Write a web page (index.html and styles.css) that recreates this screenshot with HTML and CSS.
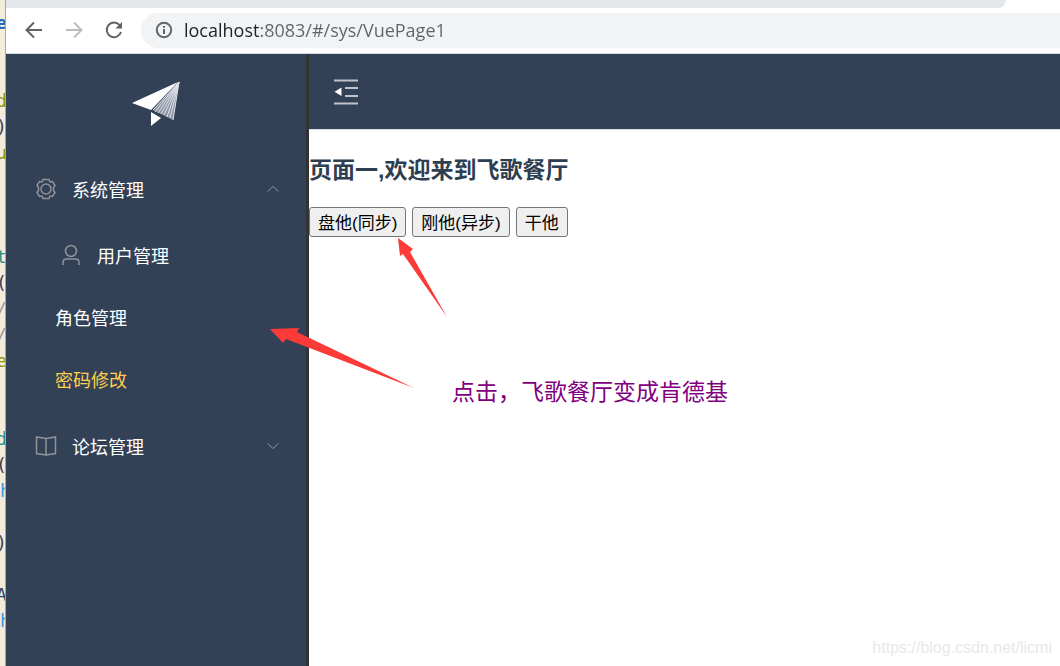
FILE: index.html
```html
<!DOCTYPE html>
<html lang="zh-CN">
<head>
  <meta charset="utf-8">
  <title>VuePage1</title>
  <link rel="stylesheet" href="styles.css">
</head>
<body>
  <div class="desktop">
    <!-- edge of the editor behind the browser -->
    <pre class="editor"><span class="cut blue">e</span>


<span class="cut olive">d</span>
<span class="cut">)</span>
<span class="cut olive">u</span>



<span class="cut teal">t</span>
<span class="cut">(</span>
<span class="cut gray">/</span>
<span class="cut gray">/</span>
<span class="cut olive">e</span>


<span class="cut teal">d</span>
<span class="cut">(</span>
<span class="sky">h</span>

<span class="cut">)</span>

<span class="cut">A</span>
<span class="sky">h</span>
</pre>

    <div class="browser">
      <div class="tab-strip"></div>
      <div class="toolbar">
        <button class="nav-button" aria-label="Back">
          <svg width="20" height="20" viewBox="0 0 20 20"><path d="M18 10H3M10 2.500L2.500 10L10 17.500"/></svg>
        </button>
        <button class="nav-button disabled" aria-label="Forward" disabled>
          <svg width="20" height="20" viewBox="0 0 20 20"><path d="M2 10H17M10 2.500L17.500 10L10 17.500"/></svg>
        </button>
        <button class="nav-button" aria-label="Reload">
          <svg width="20" height="20" viewBox="0 0 20 20"><path d="M15.500 5A7.300 7.300 0 1 0 17 12"/><path class="solid" d="M18 2V8.500H11.500Z"/></svg>
        </button>
        <div class="address">
          <svg width="18" height="18" viewBox="0 0 18 18"><circle cx="9" cy="9" r="7.200"/><path d="M9 8V13M9 5V6.800"/></svg>
          <input class="url" type="text" aria-label="Address" value="localhost:8083/#/sys/VuePage1">
        </div>
      </div>

      <div class="app">
        <nav class="sidebar">
          <div class="logo">
            <svg width="48" height="46" viewBox="0 0 48 46">
              <path fill="#fff" d="M0 22L46 1L19 29Z"/>
              <path fill="#fff" d="M19 31L29 37L19 45Z"/>
              <path fill="#8e97a5" d="M47 1L41 39L21 29Z"/>
              <path stroke="#e0e4e9" stroke-width="1" d="M47 1L21 29M47 1L23 31M47 1L26 32M47 1L29 33M47 1L32 34M47 1L35 36M47 1L38 37M47 1L41 39"/>
            </svg>
          </div>
          <button class="menu-title" aria-expanded="true">
            <svg class="icon" width="22" height="22" viewBox="0 0 22 22"><circle cx="11" cy="11" r="5"/><path d="M8 1.500H14L15 4L17.500 3.500L20 7.500L18.500 9.500V12.500L20 14.500L17.500 18.500L15 18L14 20.500H8L7 18L4.500 18.500L2 14.500L3.500 12.500V9.500L2 7.500L4.500 3.500L7 4Z"/></svg>
            <span>系统管理</span>
            <svg class="arrow" width="12" height="8" viewBox="0 0 12 8"><path d="M0.500 6.500L6 1.500L11.500 6.500"/></svg>
          </button>
          <a class="menu-item nested" href="#/sys/user">
            <svg class="icon" width="22" height="22" viewBox="0 0 22 22"><circle cx="11" cy="7" r="5.500"/><path d="M3 21V18.500Q3 15 6.500 15H15.500Q19 15 19 18.500V21"/></svg>
            <span>用户管理</span>
          </a>
          <a class="menu-item" href="#/sys/role">角色管理</a>
          <a class="menu-item active" href="#/sys/VuePage1">密码修改</a>
          <button class="menu-title" aria-expanded="false">
            <svg class="icon" width="22" height="22" viewBox="0 0 22 22"><path d="M1.500 2L11 3.500L20.500 2V18.500L11 20L1.500 18.500ZM11 3.500V20"/></svg>
            <span>论坛管理</span>
            <svg class="arrow" width="12" height="8" viewBox="0 0 12 8"><path d="M0.500 1.500L6 6.500L11.500 1.500"/></svg>
          </button>
        </nav>

        <div class="content">
          <header class="header">
            <button class="collapse" aria-label="Collapse menu">
              <svg width="24" height="26" viewBox="0 0 24 26"><path d="M0 1.500H24M11 9H24M11 17H24M0 24.500H24"/><path class="solid" d="M7.500 8.500V17L0.500 12.700Z"/></svg>
            </button>
          </header>
          <main class="page">
            <h2>页面一,欢迎来到飞歌餐厅</h2>
            <div class="actions">
              <button class="action">盘他(同步)</button>
              <button class="action">刚他(异步)</button>
              <button class="action">干他</button>
            </div>
          </main>
        </div>
      </div>
    </div>

    <svg class="pointers" width="180" height="160" viewBox="0 0 180 160">
      <path d="M128 0L143 11L140 14L177 79L133 16L130 18Z"/>
      <path d="M0 91L29 90L27 94L144 150L16 101L13 105Z"/>
    </svg>
    <div class="note">点击，飞歌餐厅变成肯德基</div>
    <div class="watermark">https://blog.csdn.net/licmi</div>
  </div>
</body>
</html>
```
FILE: styles.css
```css
:root {
  --navy: #334157;
  --border-dark: #333;
  --toolbar-icon: #5f6368;
  --menu-icon: #909399;
}

* {
  box-sizing: border-box;
}

body {
  margin: 0;
  font-family: "Liberation Sans", "Noto Sans CJK SC", sans-serif;
  font-size: 18px;
  background: #fff;
}

button {
  font-family: inherit;
  cursor: pointer;
}

svg {
  display: block;
  flex: none;
  fill: none;
}

.desktop {
  position: relative;
  display: flex;
  height: 100vh;
  overflow: hidden;
}

.editor {
  flex: none;
  width: 6px;
  margin: 0;
  padding-top: 10px;
  overflow: hidden;
  border-right: 1px solid #aaa69b;
  background: #f4ecda;
  color: #33415c;
  font: 18px/26px "DejaVu Sans Mono", monospace;
}

/* glyphs that start left of the visible strip */
.editor .cut {
  margin-left: -4px;
}

.editor .blue {
  color: #2468c0;
  font-weight: bold;
}

.editor .olive { color: #859900; }
.editor .teal { color: #2a9187; }
.editor .sky { color: #3498db; }
.editor .gray { color: #999; }

.browser {
  flex: 1;
  min-width: 0;
  display: flex;
  flex-direction: column;
}

.tab-strip {
  height: 8px;
  margin-right: 54px;
  border-bottom-right-radius: 8px;
  background: #e4e8eb;
}

.toolbar {
  display: flex;
  align-items: center;
  gap: 20px;
  height: 46px;
  padding-left: 18px;
  padding-bottom: 1px;
  border-bottom: 1px solid #d5d8dc;
}

.nav-button {
  padding: 0;
  border: none;
  background: none;
  color: var(--toolbar-icon);
}

.nav-button.disabled {
  color: #babcbe;
}

.nav-button path {
  stroke: currentColor;
  stroke-width: 2;
}

.nav-button .solid {
  fill: currentColor;
  stroke: none;
}

.address {
  flex: 1;
  display: flex;
  align-items: center;
  gap: 11px;
  height: 35px;
  margin-left: -3px;
  padding-left: 14px;
  border-radius: 18px 0 0 18px;
  background: #f1f3f4;
}

.address svg {
  stroke: var(--toolbar-icon);
  stroke-width: 2;
}

/* host is darker than the rest of the url */
.url {
  flex: 1;
  padding: 0;
  border: none;
  outline: none;
  background: linear-gradient(to right, #202124 76px, #5f6368 76px);
  background-clip: text;
  -webkit-background-clip: text;
  color: transparent;
  font: 18px "Open Sans", sans-serif;
}

.app {
  flex: 1;
  display: flex;
}

.sidebar {
  flex: none;
  width: 303px;
  border-right: 3px solid var(--border-dark);
  background: var(--navy);
}

.logo {
  display: flex;
  align-items: center;
  justify-content: center;
  height: 100px;
}

.menu-title,
.menu-item {
  display: flex;
  align-items: center;
  gap: 15px;
  padding-bottom: 2px;
  color: #fff;
  font-size: 18px;
  text-decoration: none;
}

.menu-title {
  width: 100%;
  height: 71px;
  padding: 0 27px 2px 29px;
  border: none;
  background: none;
}

.menu-item {
  height: 62px;
  padding-left: 49px;
}

.menu-item.nested {
  padding-left: 54px;
}

.menu-item.active {
  color: #ffd04b;
}

.icon {
  stroke: var(--menu-icon);
  stroke-width: 1.5;
}

.arrow {
  margin-left: auto;
  stroke: var(--menu-icon);
  stroke-width: 1;
}

.content {
  flex: 1;
  min-width: 0;
}

.header {
  display: flex;
  align-items: center;
  height: 76px;
  padding-left: 25px;
  border-bottom: 1px solid #dcdfe6;
  background: var(--navy);
}

.collapse {
  padding: 0;
  border: none;
  background: none;
}

.collapse path {
  stroke: #c0c4cc;
  stroke-width: 2;
}

.collapse .solid {
  fill: #fff;
  stroke: none;
}

.page h2 {
  margin: 24px 0 21px;
  color: #2c3e50;
  font-size: 23px;
  line-height: 32px;
}

.actions {
  display: flex;
  gap: 6px;
}

.action {
  height: 30px;
  padding: 3px 8px 0;
  border: 1px solid #767676;
  border-radius: 3px;
  background: #efefef;
  color: #000;
  font-size: 17px;
  line-height: 26px;
}

/* annotations drawn over the page */
.pointers {
  position: absolute;
  left: 270px;
  top: 238px;
  fill: #fc3a38;
  pointer-events: none;
}

.note {
  position: absolute;
  left: 452px;
  top: 376px;
  color: #800080;
  font-size: 23px;
  line-height: 32px;
}

.watermark {
  position: absolute;
  right: 8px;
  bottom: 8px;
  color: #e8e8e8;
  font-size: 16px;
  line-height: 20px;
}
```
